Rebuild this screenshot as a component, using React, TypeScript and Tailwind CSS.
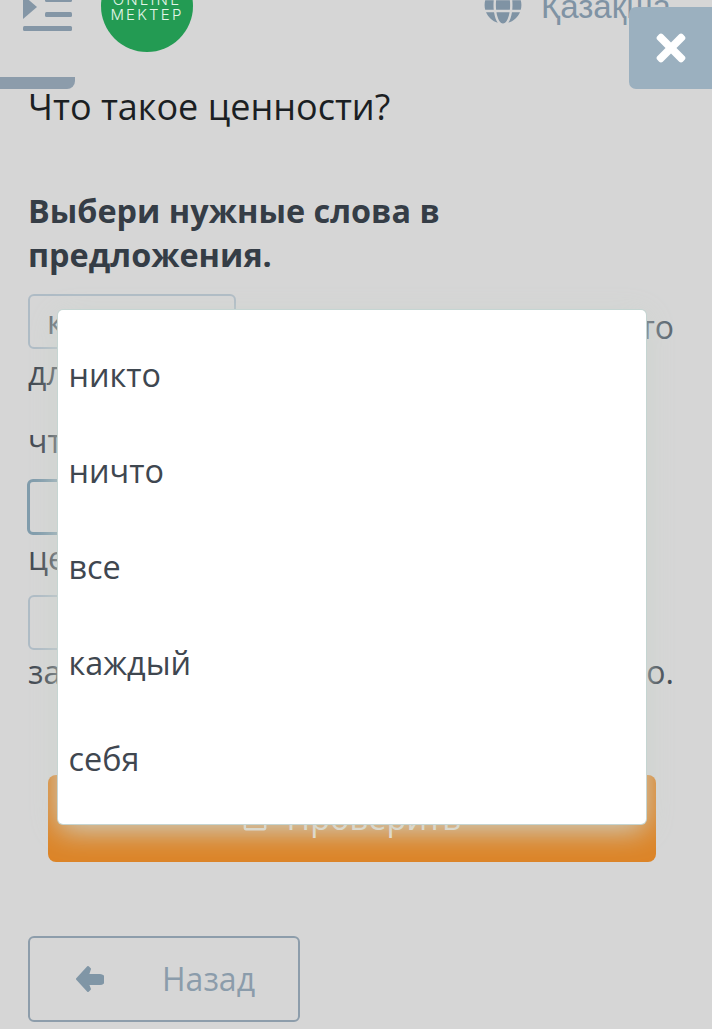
import { FaGlobe, FaTimes, FaRegCheckSquare } from "react-icons/fa";

const items = ["никто", "ничто", "все", "каждый", "себя"];
const open = { fontFamily: '"Open Sans", sans-serif' };

export default function App() {
  return (
    <div className="relative h-[1029px] w-[712px] overflow-hidden bg-[#d6d6d6] text-[#3f4750]" style={open}>
      <header className="flex h-[52px] items-start">
        <svg className="ml-[23px] mt-[-5px] shrink-0" width="50" height="37" viewBox="0 0 50 37" fill="#8496a6">
          <path d="M0 0 L14 12 L0 24 Z" />
          <rect x="22" y="2" width="27" height="5" rx="1.5" />
          <rect x="22" y="17" width="27" height="5" rx="1.5" />
          <rect x="0" y="31" width="49" height="5" rx="1.5" />
        </svg>
        <div className="ml-[28px] mt-[-40px] flex h-[92px] w-[92px] shrink-0 flex-col items-center justify-end rounded-full bg-[#239b53] pb-[30px] text-[#e2f5e8]" style={{ fontFamily: '"Inter", sans-serif' }}>
          <span className="text-[15px] font-light leading-[15px] tracking-[2.2px]">ONLINE</span>
          <span className="text-[15px] font-light leading-[15px] tracking-[2.2px]">MEKTEP</span>
        </div>
        <FaGlobe className="ml-[291px] mt-[-14px] shrink-0 text-[#7f93a4]" size={38} />
        <span className="ml-[19px] mt-[-11px] whitespace-nowrap text-[33px] leading-[36px] text-[#7f93a4]" style={{ fontFamily: '"Liberation Sans", sans-serif' }}>Қазақша</span>
      </header>

      <div className="mt-[25px] h-[12px] w-[75px] rounded-br-[8px] bg-[#8c9cab]" />

      <main className="mt-[-4px] px-[28px]">
        <h1 className="text-[36px] font-normal leading-[44px] text-[#1b1f23]">Что такое ценности?</h1>
        <h2 className="mt-[59px] text-[32.4px] font-bold leading-[44px] text-[#353d46]">Выбери нужные слова в предложения.</h2>

        <div className="mt-[18px] flex justify-between pr-[10px]">
          <div className="flex h-[55px] w-[208px] items-center rounded-[6px] border-2 border-[#aebbc5] px-[17px] text-[32px] text-[#5d6872]">каждый</div>
          <span className="self-end text-[32px] leading-[44px] text-[#5d6872]">то</span>
        </div>
        <p className="mt-[2px] text-[32px] leading-[44px]">для</p>
        <p className="mt-[24px] text-[32px] leading-[44px]">что</p>
        <div className="mt-[16px] ml-[-1px] h-[56px] w-[209px] rounded-[6px] border-[3px] border-[#7f9bab]" />
        <p className="mt-[1px] text-[32px] leading-[44px]">це</p>
        <div className="mt-[15px] h-[55px] w-[208px] rounded-[6px] border-2 border-[#aebbc5]" />
        <div className="flex justify-between pr-[10px] text-[32px] leading-[44px]">
          <span>за</span>
          <span>о.</span>
        </div>

        <button className="ml-[20px] mt-[81px] flex h-[87px] w-[608px] items-center justify-center gap-[18px] rounded-[8px] bg-[#dc8427] text-[32.5px] text-[#eadccb]">
          <FaRegCheckSquare size={26} />
          <span>Проверить</span>
        </button>

        <button className="mt-[74px] flex h-[86px] w-[272px] items-center rounded-[6px] border-2 border-[#8d9dab] pl-[45px] text-[32px] text-[#8b9cab]">
          <svg width="29" height="28" viewBox="0 0 29 28" fill="#8096a6" stroke="#8096a6" strokeWidth="2" strokeLinejoin="round">
            <path d="M13 2 L2 14 L13 26 L15 24 L13 19 H25 a4 4 0 0 0 0 -9 H13 L15 4 Z" />
          </svg>
          <span className="ml-[58px]">Назад</span>
        </button>
      </main>

      <button className="absolute right-0 top-[7px] flex h-[82px] w-[83px] items-center justify-center rounded-l-[7px] bg-[#9bb0bf] text-white">
        <FaTimes size={42} />
      </button>

      <div className="absolute left-[58px] top-[310px] flex h-[514px] w-[588px] flex-col justify-center rounded-[5px] bg-white pb-[2px] pl-[10.5px] text-[32.4px] text-[#3f4750] shadow-[0_0_0_1px_#c5d5d2,0_6px_30px_rgba(204,212,206,1)]">
        {items.map((t) => (
          <div key={t} className="flex h-[96px] items-center">{t}</div>
        ))}
      </div>
    </div>
  );
}
